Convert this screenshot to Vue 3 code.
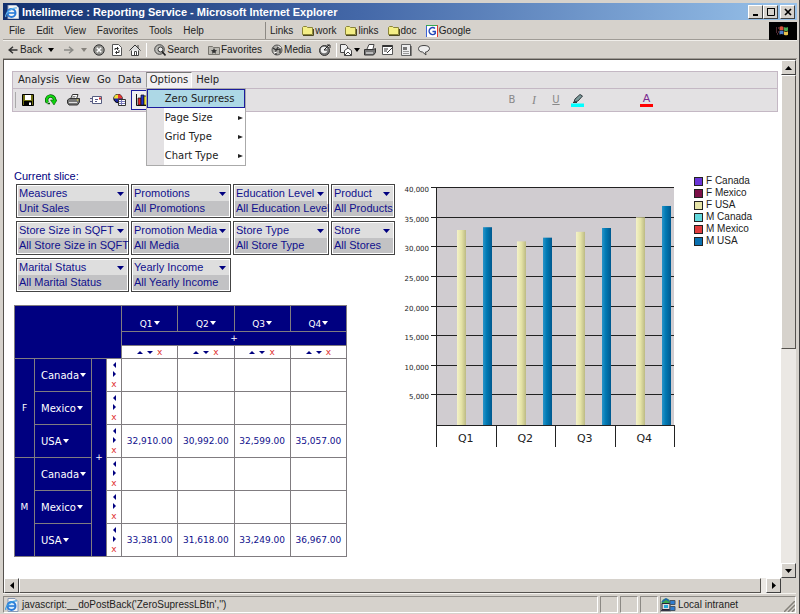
<script setup>
const menus = ['File', 'Edit', 'View', 'Favorites', 'Tools', 'Help']
const links = ['work', 'links', 'doc']
const appMenus = ['Analysis', 'View', 'Go', 'Data']
const submenus = ['Page Size', 'Grid Type', 'Chart Type']
const slices = [
  ['Measures', 'Unit Sales'],
  ['Promotions', 'All Promotions'],
  ['Education Level', 'All Education Level'],
  ['Product', 'All Products'],
  ['Store Size in SQFT', 'All Store Size in SQFT'],
  ['Promotion Media', 'All Media'],
  ['Store Type', 'All Store Type'],
  ['Store', 'All Stores'],
  ['Marital Status', 'All Marital Status'],
  ['Yearly Income', 'All Yearly Income'],
]
const quarters = ['Q1', 'Q2', 'Q3', 'Q4']
const rows = [
  { group: 'F', country: 'Canada', values: ['', '', '', ''] },
  { country: 'Mexico', values: ['', '', '', ''] },
  { country: 'USA', values: ['32,910.00', '30,992.00', '32,599.00', '35,057.00'] },
  { group: 'M', country: 'Canada', values: ['', '', '', ''] },
  { country: 'Mexico', values: ['', '', '', ''] },
  { country: 'USA', values: ['33,381.00', '31,618.00', '33,249.00', '36,967.00'] },
]
const legend = [
  ['F Canada', '#6a35d8'],
  ['F Mexico', '#7c1048'],
  ['F USA', '#e6e4a8'],
  ['M Canada', '#62d8dc'],
  ['M Mexico', '#e03c3c'],
  ['M USA', '#0a70b0'],
]

const toNumber = (text) => Number(text.replace(',', ''))
const plot = { left: 36, right: 274, top: 19, bottom: 256 }
const step = (plot.right - plot.left) / 4
const scaleY = (v) => plot.bottom - (v / 40000) * (plot.bottom - plot.top)
const ticks = [5, 10, 15, 20, 25, 30, 35, 40].map((n) => ({
  label: n + ',000',
  y: Math.round(scaleY(n * 1000)),
}))
const bars = quarters.flatMap((q, i) => [
  { x: Math.round(plot.left + i * step + 21), y: scaleY(toNumber(rows[2].values[i])), fill: 'url(#sand)' },
  { x: Math.round(plot.left + i * step + 47), y: scaleY(toNumber(rows[5].values[i])), fill: 'url(#sea)' },
])
</script>

<template>
  <div class="window">
    <header class="titlebar">
      <svg class="ie" viewBox="0 0 14 14" width="14" height="14">
        <path d="M3 0h8l3 3v11H3z" fill="#f4f4f4" stroke="#8899b5" />
        <circle cx="6.5" cy="8" r="4" fill="none" stroke="#2a7bd8" stroke-width="2" />
        <path d="M3 8h7" stroke="#2a7bd8" stroke-width="1.6" />
        <path d="M1 12C-1 9 7 2 12 3" fill="none" stroke="#62b4ec" stroke-width="1.2" />
      </svg>
      <h1>Intellimerce : Reporting Service - Microsoft Internet Explorer</h1>
      <div class="controls">
        <button aria-label="Minimize"><svg viewBox="0 0 10 10" width="10" height="10"><path d="M2 8h5" stroke="#000" stroke-width="2" /></svg></button>
        <button aria-label="Maximize"><svg viewBox="0 0 10 10" width="10" height="10"><path d="M1 1.5h8M1.5 2v6.5h7V2" fill="none" stroke="#000" /><path d="M1 1h8v1H1z" /></svg></button>
        <button class="close" aria-label="Close"><svg viewBox="0 0 10 10" width="10" height="10"><path d="M2 2l6 6M8 2L2 8" stroke="#000" stroke-width="1.7" /></svg></button>
      </div>
    </header>

    <div class="menurow">
      <nav class="menus"><button v-for="m in menus" :key="m">{{ m }}</button></nav>
      <nav class="links">
        <span>Links</span>
        <a v-for="l in links" :key="l" href="#">
          <svg viewBox="0 0 12 10" width="12" height="10"><path d="M.5 8.5v-7l1-1h3l1 1h5v7z" fill="#f4ee86" stroke="#8a8438" /><path d="M1 9.5h10.500V3" fill="none" stroke="#4c4820" /></svg>{{ l }}
        </a>
        <a href="#">
          <svg viewBox="0 0 12 12" width="12" height="12"><path fill="#fff" d="M0 0h12v12H0z" /><path d="M.5 0v12" stroke="#3b62d8" /><path d="M0 .5h12" stroke="#36a850" /><path d="M11.500 0v12" stroke="#e43b35" /><path d="M9 3.500A3.500 3.500 0 1 0 9.200 8.500V6.500H6.500" fill="none" stroke="#2346b8" stroke-width="1.500" /></svg>Google
        </a>
      </nav>
      <div class="throbber">
        <svg viewBox="0 0 14 12" width="14" height="12">
          <path d="M0 3h3M0 5h2M0 7h3M1 9h2" stroke="#9a5060" stroke-dasharray="1 1" />
          <path d="M3.500 2q2-1.500 4 0v3.500q-2-1-4 0z" fill="#d8543c" /><path d="M8 2q2 1 4 0v3.500q-2 1-4 0z" fill="#4aa854" />
          <path d="M3.500 6q2-1 4 0v3.500q-2-1-4 0z" fill="#5080c8" /><path d="M8 6.200q2 1 4 0v3.500q-2 1-4 0z" fill="#e8c44c" />
        </svg>
      </div>
    </div>

    <div class="toolrow">
      <button class="back"><svg viewBox="0 0 10 8" width="10" height="8"><path d="M5 .8L1.200 4 5 7.200M1.500 4h8" fill="none" stroke="#333" stroke-width="1.500" /></svg>Back</button>
      <button class="ico" aria-label="Back history"><svg viewBox="0 0 6 4" width="6" height="4"><path d="M0 0h6L3 4z" /></svg></button>
      <button class="ico" aria-label="Forward"><svg viewBox="0 0 10 8" width="10" height="8"><path d="M5 .8L8.800 4 5 7.200M0 4h8.500" fill="none" stroke="#8a8a86" stroke-width="1.500" /></svg></button>
      <button class="tight" aria-label="Forward history"><svg viewBox="0 0 6 4" width="6" height="4"><path d="M0 0h6L3 4z" fill="#85827c" /></svg></button>
      <button class="ico" aria-label="Stop"><svg viewBox="0 0 12 12" width="12" height="12"><circle cx="6" cy="6" r="5.200" fill="#91918d" stroke="#333" /><path d="M3.800 3.800l4.400 4.400M8.200 3.800L3.800 8.200" stroke="#fff" stroke-width="1.500" /></svg></button>
      <button class="ico" aria-label="Refresh"><svg viewBox="0 0 12 12" width="12" height="12"><path d="M1.500.5h6l3 3v8h-9z" fill="#fff" stroke="#555" /><path d="M4 6V4.500h3M6 3l1.500 1.500L6 6M8 6v2.500H5M6 7L4.500 8.500 6 10" fill="none" stroke="#333" /></svg></button>
      <button class="ico" aria-label="Home"><svg viewBox="0 0 12 12" width="12" height="12"><path d="M2.500 6v5.500h7V6" fill="#fff" stroke="#444" /><path d="M.5 6.500L6 1l5.500 5.500" fill="#ddd" stroke="#333" /><path d="M9 1v3M5.500 11V7.500h2V11" fill="none" stroke="#444" /></svg></button>
      <i class="sep"></i>
      <button class="wide"><svg viewBox="0 0 12 12" width="12" height="12"><circle cx="5.500" cy="5.500" r="4.800" fill="#b9b9b4" stroke="#444" /><circle cx="6.500" cy="5.500" r="2.500" fill="#eee" stroke="#333" /><path d="M8 7.500l3.500 4" stroke="#222" stroke-width="1.600" /></svg>Search</button>
      <button class="wide"><svg viewBox="0 0 12 12" width="12" height="12"><path d="M.5 10.500v-8h4l1 1h6v7z" fill="#bbb9b2" stroke="#77756e" /><path d="M6 4l1 2 2 .2-1.500 1.500.5 2L6 8.500 4 9.700l.5-2L3 6.200 5 6z" fill="#333" /></svg>Favorites</button>
      <button class="wide"><svg viewBox="0 0 12 12" width="12" height="12"><circle cx="6" cy="6" r="5" fill="#aaa9a4" stroke="#555" /><path d="M2 4l3 2 3-4M5 11V6l4-1v4" fill="none" stroke="#333" stroke-width="1.200" /><path d="M3 9l3-1M7 2l3 2" stroke="#fff" /></svg>Media</button>
      <button class="ico" aria-label="History"><svg viewBox="0 0 12 12" width="12" height="12"><circle cx="5.500" cy="6.500" r="5" fill="#777" stroke="#333" /><circle cx="5" cy="6" r="3.200" fill="#eee" /><path d="M5 6l5-5M5 6h3M8 1h3v3" fill="none" stroke="#222" /></svg></button>
      <i class="sep"></i>
      <button class="mail" aria-label="Mail"><svg viewBox="0 0 20 12" width="20" height="12"><path d="M.5.5h5l2 2v6h-7z" fill="#eee" stroke="#444" /><path d="M4.500 6.500L8 4l3.500 2.500v5h-7z" fill="#fff" stroke="#444" /><path d="M4.500 11.500L8 8l3.500 3.500" fill="none" stroke="#444" /><path d="M14 4h6l-3 4z" /></svg></button>
      <button class="ico" aria-label="Print"><svg viewBox="0 0 12 12" width="12" height="12"><path d="M3 5l2-4.500h5L9 5" fill="#fff" stroke="#444" /><path d="M.5 5.500h9l2-1v4l-2 2.500h-9z" fill="#777" stroke="#333" /><path d="M2 9h7" stroke="#fff" /></svg></button>
      <button class="ico" aria-label="Edit"><svg viewBox="0 0 12 12" width="12" height="12"><path d="M.5 1.500h10v9H.5z" fill="#fff" stroke="#555" /><path d="M.5 2h10" stroke="#333" stroke-width="2" /><path d="M2 5h4M2 7h3M5 9l6-6" stroke="#333" /></svg></button>
      <button class="ico" aria-label="Page"><svg viewBox="0 0 12 12" width="12" height="12"><path d="M1.500.5h9v11h-9z" fill="#eee" stroke="#666" /><path d="M3 3h4v3H3z" fill="#777" /><path d="M3 7.500h6M3 9.500h6" stroke="#999" /><path d="M11 2v10" stroke="#333" /></svg></button>
      <button class="ico" aria-label="Discuss"><svg viewBox="0 0 12 12" width="12" height="12"><path d="M6 1.500c3 0 5.500 1 5.500 3S9 8 7.500 8l.5 3-3.500-3C2 8 .5 6.500.5 4.500s2.500-3 5.500-3z" fill="#eee" stroke="#444" /></svg></button>
    </div>

    <div class="viewport">
      <main class="page">
        <section class="appbar">
          <nav class="appmenu">
            <button v-for="m in appMenus" :key="m">{{ m }}</button>
            <div class="dropdown">
              <button class="open">Options</button>
              <div class="popup">
                <button class="active">Zero Surpress</button>
                <button v-for="s in submenus" :key="s">{{ s }}<svg viewBox="0 0 5 4" width="5" height="4"><path d="M0 0l5 2-5 2z" fill="#222" /></svg></button>
              </div>
            </div>
            <button>Help</button>
          </nav>
          <div class="apptools">
            <i class="grip"></i>
            <button aria-label="Save"><svg viewBox="0 0 12 12" width="12" height="12"><path d="M.5.5h11v11H.5z" fill="#6e6e10" stroke="#000" /><path d="M3 1h6v5H3z" fill="#fff" /><path d="M2 7h8v5H2z" fill="#000" /><path d="M7 8.500h2V11H7z" fill="#fff" /></svg></button>
            <button aria-label="Refresh"><svg viewBox="0 0 12 12" width="12" height="12"><path d="M2.500 8.500A4 4 0 1 1 9.500 7" fill="none" stroke="#075a07" stroke-width="3.400" /><path d="M5.500 6H12L9 11z" fill="#0bd40b" stroke="#075a07" stroke-width=".6" /><path d="M2.500 8.500A4 4 0 1 1 9.500 7" fill="none" stroke="#12d812" stroke-width="2" /><path d="M2.500 9.500h2.500" stroke="#075a07" stroke-width="1.500" /></svg></button>
            <button aria-label="Print"><svg viewBox="0 0 13 12" width="13" height="12"><path d="M3.500 5l2-4.500H11L9.500 5" fill="#fff" stroke="#333" /><path d="M5.500 2.500h3M5 4h3" stroke="#555" stroke-width=".7" /><path d="M.5 6l2-1.500h10v3.500l-2 3H2L.5 9z" fill="#777" stroke="#333" /><path d="M2 8.500h8" stroke="#ddd" /><circle cx="10.500" cy="6" r=".7" fill="#e8e040" /></svg></button>
            <button aria-label="Mail"><svg viewBox="0 0 13 10" width="13" height="10"><path d="M2.500 1.500h9v7h-9z" fill="#fff" stroke="#555c80" /><path d="M5 4.500h3M5 6.500h2M0 3.500h2M0 6.500h2" stroke="#5a5a88" /><path d="M9 2.500h2v2H9z" fill="#cc3030" /></svg></button>
            <button aria-label="Chart wizard"><svg viewBox="0 0 13 12" width="13" height="12"><circle cx="5" cy="4.500" r="4.200" fill="#1d239c" stroke="#000" /><path d="M5 4.500V.3a4.200 4.200 0 0 1 4.200 4.200z" fill="#e43b32" /><path d="M5 4.500H1A4 4 0 0 1 5 .5z" fill="#f0e03a" /><path d="M5.500 5.500h7v6h-7z" fill="#fff" stroke="#333" /><path d="M6 7.500h6M8.500 6v5M6 9.500h6" stroke="#7878b8" /></svg></button>
            <button class="pressed" aria-label="Show chart"><svg viewBox="0 0 14 12" width="14" height="12"><path d="M.5 0v11.500H14" fill="none" stroke="#111" /><path d="M2 4h3v7H2z" fill="#e02828" stroke="#111" stroke-width=".7" /><path d="M5 1h3v10H5z" fill="#2432c8" stroke="#111" stroke-width=".7" /><path d="M8 2h2.500v9H8z" fill="#efe02e" stroke="#111" stroke-width=".7" /><path d="M10.500 4H13v7h-2.500z" fill="#d82828" stroke="#111" stroke-width=".7" /></svg></button>
            <div class="format">
              <button class="letter">B</button>
              <button class="letter italic">I</button>
              <button class="letter under">U</button>
              <button aria-label="Fill colour"><svg viewBox="0 0 14 13" width="14" height="13"><path d="M3 8l1-3 5-4.500 2.500 1.500L7 7z" fill="#7b9a9a" stroke="#333b40" /><path d="M2 8.500h4" stroke="#333" /><path d="M0 9.500h13v3.500H0z" fill="#0ff" /></svg></button>
            </div>
            <button class="fontcolor" aria-label="Font colour"><span>A</span></button>
          </div>
        </section>

        <div class="report">
          <div class="left">
            <h2>Current slice:</h2>
            <div class="slices">
              <div v-for="s in slices" :key="s[0]" class="slice">
                <button>{{ s[0] }}<svg viewBox="0 0 7 4" width="7" height="4"><path d="M0 0h7L3.500 4z" fill="#000080" /></svg></button>
                <span>{{ s[1] }}</span>
              </div>
            </div>

            <table>
              <colgroup>
                <col class="c-group"><col class="c-country"><col class="c-plus"><col class="c-sort"><col v-for="q in quarters" :key="q">
              </colgroup>
              <tbody>
                <tr class="heads">
                  <th class="navy" colspan="4" rowspan="3"></th>
                  <th v-for="q in quarters" :key="q" class="navy">{{ q }}<svg viewBox="0 0 6 4" width="6" height="4"><path d="M0 0h6L3 4z" fill="#fff" /></svg></th>
                </tr>
                <tr class="plusrow"><th class="navy" colspan="4">+</th></tr>
                <tr class="sortrow">
                  <td v-for="q in quarters" :key="q">
                    <div class="sort">
                      <svg viewBox="0 0 6 3" width="6" height="3"><path d="M0 3h6L3 0z" fill="#000080" /></svg>
                      <svg viewBox="0 0 6 3" width="6" height="3"><path d="M0 0h6L3 3z" fill="#000080" /></svg>
                      <b>x</b>
                    </div>
                  </td>
                </tr>
                <tr v-for="(r, i) in rows" :key="i" class="data">
                  <th v-if="r.group" class="navy" rowspan="3">{{ r.group }}</th>
                  <th class="navy country">{{ r.country }}<svg viewBox="0 0 6 4" width="6" height="4"><path d="M0 0h6L3 4z" fill="#fff" /></svg></th>
                  <th v-if="i === 0" class="navy" rowspan="6">+</th>
                  <td>
                    <div class="vsort">
                      <svg viewBox="0 0 3 6" width="3" height="6"><path d="M3 0v6L0 3z" fill="#000080" /></svg>
                      <svg viewBox="0 0 3 6" width="3" height="6"><path d="M0 0v6l3-3z" fill="#000080" /></svg>
                      <b>x</b>
                    </div>
                  </td>
                  <td v-for="(v, k) in r.values" :key="k" class="value">{{ v }}</td>
                </tr>
              </tbody>
            </table>
          </div>

          <svg class="chart" viewBox="0 0 280 280" width="280" height="280" role="img" aria-label="Unit sales by quarter">
            <defs>
              <linearGradient id="sand"><stop offset="0" stop-color="#f4f2c8" /><stop offset=".5" stop-color="#e4e2a6" /><stop offset="1" stop-color="#bcba84" /></linearGradient>
              <linearGradient id="sea"><stop offset="0" stop-color="#2a94c8" /><stop offset=".4" stop-color="#007ab4" /><stop offset="1" stop-color="#00588e" /></linearGradient>
            </defs>
            <rect :x="plot.left" :y="plot.top" :width="plot.right - plot.left" :height="plot.bottom - plot.top" fill="#d0ccd0" />
            <g v-for="t in ticks" :key="t.label">
              <rect x="31" :y="t.y - 1" width="243" height="1" fill="#222" />
              <text class="tick" x="29" :y="t.y + 4">{{ t.label }}</text>
            </g>
            <rect v-for="(b, i) in bars" :key="i" :x="b.x" :y="b.y" width="9" :height="plot.bottom - b.y" :fill="b.fill" />
            <path d="M36.500 18v260M36 256.500h239" stroke="#222" />
            <g v-for="(q, i) in quarters" :key="q">
              <rect :x="Math.round(plot.left + (i + 1) * step)" y="257" width="1" height="21" fill="#222" />
              <text class="quarter" :x="plot.left + (i + 0.5) * step" y="273">{{ q }}</text>
            </g>
          </svg>

          <ul class="legend">
            <li v-for="l in legend" :key="l[0]"><i :style="{ background: l[1] }"></i>{{ l[0] }}</li>
          </ul>
        </div>
      </main>

      <div class="vbar">
        <button aria-label="Scroll up"><svg viewBox="0 0 7 4" width="7" height="4"><path d="M0 4h7L3.500 0z" /></svg></button>
        <div class="vthumb"></div>
        <div class="vtrack"></div>
        <button aria-label="Scroll down"><svg viewBox="0 0 7 4" width="7" height="4"><path d="M0 0h7L3.500 4z" /></svg></button>
      </div>
      <div class="hbar">
        <button aria-label="Scroll left"><svg viewBox="0 0 4 7" width="4" height="7"><path d="M4 0v7L0 3.500z" /></svg></button>
        <div class="hthumb"></div>
        <div class="htrack"></div>
        <button aria-label="Scroll right"><svg viewBox="0 0 4 7" width="4" height="7"><path d="M0 0v7l4-3.500z" /></svg></button>
      </div>
      <div class="corner"></div>
    </div>

    <footer class="status">
      <div class="message">
        <svg viewBox="0 0 14 14" width="14" height="14">
          <path d="M3 .5h7l3 3v10H3z" fill="#f4f4f4" stroke="#8899b5" />
          <circle cx="6.500" cy="8" r="4" fill="#d8ecfa" stroke="#2a7bd8" stroke-width="2" />
          <path d="M3 8h7" stroke="#2a7bd8" stroke-width="1.600" /><path d="M1 12C-1 9 7 2 12 3" fill="none" stroke="#3a9ce0" stroke-width="1.200" />
        </svg>
        javascript:__doPostBack('ZeroSupressLBtn','')
      </div>
      <div class="slot"></div><div class="slot"></div><div class="slot"></div>
      <div class="zone">
        <svg viewBox="0 0 15 14" width="15" height="14">
          <circle cx="5" cy="5" r="4.500" fill="#38a850" /><path d="M1 4l4-3 3 2" stroke="#2060b0" fill="none" stroke-width="1.500" />
          <path d="M1 5.500h8v6H1z" fill="#ddd" stroke="#223" /><path d="M3 7h4v3H3z" fill="#27a8d8" /><path d="M0 12.500h10" stroke="#334" stroke-width="1.500" />
          <path d="M9 2.500h5v4H9zM9 8.500h5v4H9z" fill="#2e7cd0" stroke="#456" />
        </svg>
        <span>Local intranet</span>
        <svg class="resize" viewBox="0 0 11 11" width="11" height="11"><path d="M0 11L11 0M4 11l7-7M8 11l3-3" stroke="#84817a" stroke-width="1.500" /></svg>
      </div>
    </footer>
  </div>
</template>

<style>
body { margin: 0; }
</style>

<style scoped>
* { box-sizing: border-box; }
button { appearance: none; border: 0; margin: 0; padding: 0; background: none; font: inherit; color: inherit; display: flex; align-items: center; justify-content: center; white-space: nowrap; }
svg { display: block; flex: none; }
h1, h2, ul { margin: 0; padding: 0; font-weight: normal; }
.window { min-height: 100vh; display: flex; flex-direction: column; padding: 3px 2px 2px 3px; background: #d6d2cc; border-right: 1px solid #404040; border-bottom: 1px solid #404040; font: 10px/12px "Liberation Sans", Arial, sans-serif; color: #222; }
.titlebar { display: flex; align-items: center; height: 17px; gap: 3px; padding: 0 2px; background: linear-gradient(90deg, #12306f, #4468a8 45%, #98c2ea); color: #fff; }
.titlebar h1 { flex: 1; font-size: 11px; line-height: 14px; font-weight: bold; white-space: nowrap; }
.controls { display: flex; }
.controls button, .vbar button, .hbar button { background: #d6d2cc; border: 1px solid; border-color: #fff #404040 #404040 #fff; }
.controls button { width: 15px; height: 14px; }
.controls .close { margin-left: 2px; }
.menurow { display: flex; height: 20px; padding-top: 2px; border-bottom: 1px solid #a09c96; }
.menus { display: flex; align-items: center; gap: 11px; width: 263px; padding-left: 6px; border-right: 1px solid #8c8984; }
.links { flex: 1; display: flex; align-items: center; gap: 9px; padding-left: 4px; }
.links a { display: flex; align-items: center; gap: 1px; color: inherit; text-decoration: none; }
.throbber { width: 28px; display: flex; align-items: center; justify-content: center; background: #000; margin-bottom: -1px; }
.toolrow { display: flex; align-items: center; height: 19px; padding-left: 5px; border-bottom: 1px solid #a09c96; border-top: 1px solid #f0eeea; }
.back { gap: 2px; }
.ico { width: 18px; height: 16px; }
.tight { width: 12px; }
.wide { gap: 1px; margin-left: 5px; }
.wide + .wide { margin-left: 9px; }
.wide + .ico { margin-left: 5px; }
.mail { width: 22px; }
.sep { width: 1px; height: 14px; margin: 0 2px; background: #8c8984; border-right: 1px solid #fff; }

.viewport { flex: 1; display: grid; grid-template-columns: 1fr 15px; grid-template-rows: 1fr 15px; border: solid #55524e; border-width: 1px 0 0 1px; margin-right: 1px; }
.page { background: #fff; padding: 11px 3px 21px 8px; min-width: 0; }
.appbar { background: #e3e1e3; border: 1px solid #c4b8c4; font: 10px/12px "DejaVu Sans", Verdana, sans-serif; color: #222; }
.appmenu { display: flex; height: 17px; gap: 1px; padding-left: 2px; border-bottom: 1px solid #c4b8c4; }
.appmenu > button { padding: 0 3px; }
.dropdown { position: relative; display: flex; }
.open { padding: 0 3px; background: #f2f0f2; border: 1px solid; border-color: #777 #fff transparent #999; }
.popup { position: absolute; z-index: 2; top: 16px; left: 0; width: 100px; background: linear-gradient(90deg, #e3e1e3 17px, #fff 17px); border: 1px solid #aaa; }
.popup button { width: 100%; height: 19px; padding: 0 1px 0 17px; border: 1px solid transparent; justify-content: space-between; }
.popup .active { background: #add8e6; border-color: #1c1c9c; }
.apptools { display: flex; align-items: center; height: 22px; }
.apptools button { width: 23px; height: 20px; }
.grip { width: 1px; height: 16px; margin: 0 0 0 2px; background: #aaa; }
.apptools .pressed { border: 1px solid #1c1c9c; background: #f0eef0; }
.format { display: flex; margin-left: 347px; }
.letter { color: #888; }
.apptools .format button { width: 22px; }
.italic { font-family: "Liberation Serif", serif; font-style: italic; font-size: 12px; }
.under { text-decoration: underline; }
.apptools .fontcolor { margin-left: 46px; }
.fontcolor span { font-size: 11px; line-height: 10px; width: 13px; color: #7a2a90; border-bottom: 3px solid #f00; }

.report { display: flex; align-items: flex-start; margin-top: 57px; padding-left: 2px; }
.left { width: 381px; flex: none; color: #000080; font-size: 11px; }
.left h2 { font-size: 11px; line-height: 15px; }
.slices { display: grid; grid-template-columns: 113px 100px 96px 64px; gap: 3px 2px; padding-left: 2px; }
.slice { border: 1px solid #444; padding: 1px; background: #fff; line-height: 15px; color: #10108c; }
.slice button { width: 100%; justify-content: space-between; background: #dedede; padding: 0 3px 0 1px; }
.slice span { display: block; background: #c2c2c4; padding-left: 1px; white-space: nowrap; }
table { width: 333px; table-layout: fixed; border-collapse: collapse; margin-top: 13px; font: 9px/11px "DejaVu Sans", Verdana, sans-serif; }
.c-group { width: 20px; }
.c-country { width: 57px; }
.c-plus { width: 15px; }
.c-sort { width: 15px; }
th, td { padding: 0; border: 1px solid #807c80; font-weight: normal; text-align: center; }
th svg { display: inline-block; vertical-align: 2px; margin-left: 1px; }
.navy { background: #000080; color: #fff; }
.heads { height: 26px; }
.heads th { vertical-align: bottom; padding-bottom: 1px; }
.plusrow { height: 14px; }
.sortrow { height: 13px; }
.data { height: 33px; }
.country { font-size: 10px; text-align: left; padding-left: 6px; }
.sort { display: flex; justify-content: center; align-items: center; gap: 4px; }
b { font: 9px/9px "DejaVu Sans", Verdana, sans-serif; color: #e03030; }
.vsort { display: flex; flex-direction: column; align-items: center; gap: 3px; }
.value { color: #10108c; }
.chart { margin-left: 5px; flex: none; }
.tick { font: 7px "DejaVu Sans", Verdana, sans-serif; text-anchor: end; fill: #222; }
.quarter { font: 11px "DejaVu Sans", Verdana, sans-serif; text-anchor: middle; fill: #222; }
.legend { list-style: none; margin: 6px 0 0 14px; white-space: nowrap; }
.legend li { display: flex; align-items: center; gap: 3px; }
.legend i { width: 9px; height: 9px; border: 1px solid #222; }

.vbar { display: flex; flex-direction: column; background: #ebe8e4; }
.vbar button { height: 15px; }
.vthumb, .hthumb { background: #d6d2cc; border: 1px solid; border-color: #fff #55524e #55524e #fff; }
.vthumb { flex: 56; }
.vtrack { flex: 44; }
.hbar { display: flex; background: #ebe8e4; }
.hbar button { width: 15px; }
.hthumb { flex: 1; }
.htrack { width: 5px; }
.status { display: flex; gap: 2px; height: 20px; padding-top: 2px; margin-right: 1px; border-top: 1px solid #f4f2ee; line-height: 15px; }
.status > div { border: 1px solid; border-color: #8c8984 #fff #fff #8c8984; }
.message { flex: 1; display: flex; align-items: center; gap: 3px; padding-left: 1px; }
.slot { width: 18px; }
.zone { width: 136px; display: flex; align-items: center; gap: 2px; }
.resize { margin-left: auto; align-self: flex-end; }
</style>
